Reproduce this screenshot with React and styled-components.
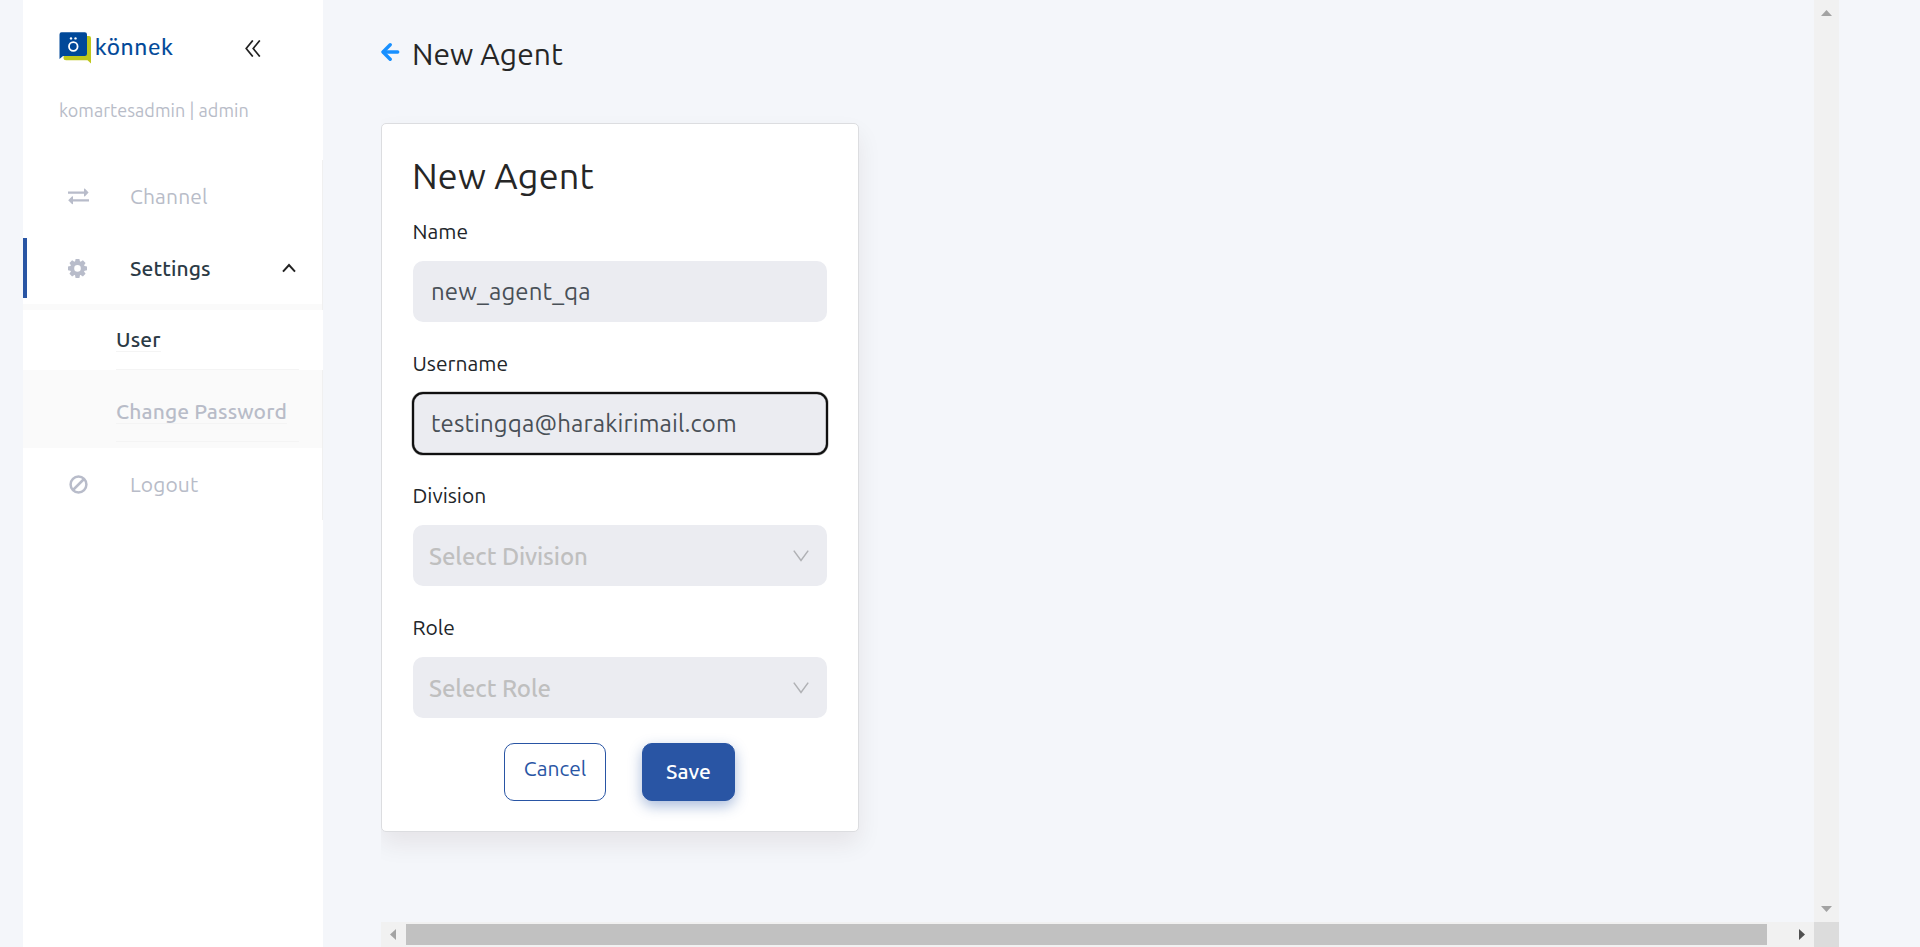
import React from "react";
import styled, { createGlobalStyle } from "styled-components";

const GlobalStyle = createGlobalStyle`
  *, *::before, *::after { box-sizing: border-box; }
  html, body { margin: 0; height: 100%; overflow: hidden; }
  body {
    background: #f4f6fa;
    font-family: Ubuntu, "Noto Sans", sans-serif;
    color: #212529;
  }
`;

const Page = styled.div`
  display: flex;
  width: 1920px;
  height: 947px;
  padding-left: 23px;
  overflow: hidden;
`;

/* ---------- sidebar ---------- */

const Sidebar = styled.aside`
  flex: none;
  width: 300px;
  background: #fff;
`;

const Brand = styled.div`
  display: flex;
  height: 94px;
  padding: 32px 62px 0 36px;
  justify-content: space-between;
`;

const Logo = styled.div`
  display: flex;
  gap: 3px;

  > svg { flex: none; }
`;

const LogoName = styled.span`
  font-family: Lato, sans-serif;
  font-size: 22.5px;
  line-height: 30px;
  letter-spacing: 1.15px;
  color: #004899;
  -webkit-text-stroke: 0.15px #004899;
`;

const CollapseIcon = styled.svg`
  margin-top: 8px;
`;

const Profile = styled.div`
  height: 66px;
  padding-left: 36px;
  font-size: 18px;
  line-height: 33px;
  letter-spacing: 0.05px;
  color: #b8bcc8;
`;

const Menu = styled.nav`
  width: 300px;
  height: 360px;
  border-right: 1px solid #f0f0f0;
`;

const MenuGroup = styled.div`
  display: flow-root;
`;

const MenuItem = styled.div`
  display: flex;
  align-items: center;
  justify-content: space-between;
  height: 60px;
  margin: 6px 0;
  padding: 0 26px 0 41px;
  border-left: 4px solid ${(p) => (p.$active ? "#2955a4" : "transparent")};
  color: ${(p) => (p.$active ? "#2b3a45" : "#b8bcc8")};
  font-size: 21px;
  font-weight: ${(p) => (p.$active ? 500 : 400)};
  letter-spacing: 0.12px;
`;

const MenuLabel = styled.span`
  display: flex;
  align-items: center;
  gap: 40px;
`;

const Submenu = styled.div`
  display: flow-root;
  height: 144px;
  background: #fafafa;
`;

const SubItem = styled.div`
  height: 60px;
  margin: 0 ${(p) => (p.$active ? "-1px" : "0")} 12px 0;
  padding-left: 93px;
  background: ${(p) => (p.$active ? "#fff" : "transparent")};
  color: ${(p) => (p.$active ? "#2b3a45" : "#b8bcc8")};

  &:first-child { margin-top: 6px; }
`;

const SubItemBody = styled.div`
  display: flex;
  align-items: center;
  width: 183px;
  height: 60px;
  border-bottom: 1px solid #f4f4f4;
`;

const SubItemLabel = styled.span`
  margin-top: 2px;
  padding-bottom: 2px;
  border-bottom: 1px solid #f4f4f4;
  font-size: 21px;
  font-weight: 500;
  line-height: 20px;
  letter-spacing: 0.12px;
  white-space: nowrap;
`;

/* ---------- content ---------- */

const Content = styled.main`
  display: flex;
  flex-direction: column;
  width: 1433px;
  height: 947px;
  margin-left: 58px;
`;

const Scroller = styled.div`
  height: 922px;
  overflow: hidden;
`;

const PageHeader = styled.header`
  display: flex;
  height: 123px;
  padding-top: 34px;
  gap: 11px;

  > svg { flex: none; margin-top: 8px; }
`;

const PageTitle = styled.h1`
  margin: 0;
  font-size: 30px;
  font-weight: 400;
  line-height: 40px;
  letter-spacing: 0.05px;
  color: #262626;
`;

const Card = styled.section`
  width: 478px;
  height: 709px;
  padding: 30px 31px;
  background: #fff;
  border: 1px solid #dcdde0;
  border-radius: 5px;
  box-shadow: 0 12px 24px rgba(50, 0, 0, 0.075);
`;

const CardTitle = styled.h2`
  margin: 0 0 18px -1px;
  font-size: 36px;
  font-weight: 400;
  line-height: 44px;
  letter-spacing: 0.15px;
  color: #262626;
`;

const Fields = styled.div`
  display: flex;
  flex-direction: column;
  gap: 26px;
`;

const Field = styled.label`
  display: block;
`;

const FieldLabel = styled.span`
  display: block;
  height: 30px;
  margin: 0 0 15px -0.5px;
  font-size: 21px;
  line-height: 30px;
  color: #212529;
`;

const TextInput = styled.input`
  display: block;
  width: 414px;
  height: 61px;
  padding: 0 18px;
  border: 0;
  border-radius: 10px;
  outline: ${(p) => (p.$focused ? "2px solid #101010" : "none")};
  outline-offset: -1px;
  box-shadow: ${(p) =>
    p.$focused ? "0 0 0 1.5px rgba(0, 0, 0, 0.35), inset 0 0 0 1.5px rgba(0, 0, 0, 0.35)" : "none"};
  background: #ebecf1;
  font-family: inherit;
  font-size: 24px;
  letter-spacing: 0.14px;
  color: #495057;
`;

const Select = styled.div`
  display: flex;
  align-items: center;
  justify-content: space-between;
  width: 414px;
  height: 61px;
  padding: 0 18px 0 16px;
  border-radius: 10px;
  background: #ebecf1;
  font-size: 24px;
  font-weight: 500;
  letter-spacing: -0.1px;
  line-height: 28px;
  color: #bfbfbf;
`;

const SelectText = styled.span`
  padding-top: 2px;
`;

const Actions = styled.div`
  display: flex;
  justify-content: center;
  gap: 36px;
  margin-top: 25px;
  padding-right: 1px;
`;

const Button = styled.button`
  width: ${(p) => (p.$primary ? "93px" : "102px")};
  height: 58px;
  padding: ${(p) => (p.$primary ? "0 0 2px" : "0 0 8px")};
  border: 1px solid #2955a4;
  border-radius: 10px;
  background: ${(p) => (p.$primary ? "#2955a4" : "#fff")};
  box-shadow: ${(p) => (p.$primary ? "0 5px 14px rgba(41, 85, 164, 0.4)" : "none")};
  color: ${(p) => (p.$primary ? "#fff" : "#2955a4")};
  font-family: inherit;
  font-size: 21px;
  font-weight: ${(p) => (p.$primary ? 500 : 400)};
`;

/* ---------- scroll bars ---------- */

const HorizontalBar = styled.div`
  display: flex;
  align-items: center;
  justify-content: space-between;
  height: 25px;
  padding: 0 9px;
  background: #f1f1f1;
`;

const Thumb = styled.div`
  width: 1361px;
  height: 21px;
  margin: 0 auto 0 10px;
  background: #c1c1c1;
`;

const VerticalRail = styled.div`
  width: 25px;
  height: 947px;
`;

const VerticalBar = styled.div`
  display: flex;
  flex-direction: column;
  align-items: center;
  justify-content: space-between;
  height: 922px;
  padding: 10px 0;
  background: #f1f1f1;
`;

const Corner = styled.div`
  height: 25px;
  background: #dcdcdc;
`;

/* ---------- drawings ---------- */

const LogoMark = () => (
  <svg width="33" height="32" viewBox="0 0 33 32">
    <path d="M6 4h24q2 0 2 2v25.500l-3.500-3.200H7q-2.500 0-2.500-2z" fill="#bfc71c" />
    <path d="M2.500.3h23.300q2.200 0 2.200 2.200v19.300q0 2.200-2.200 2.200H4L.5 27V2.500Q.5.3 2.500.3z" fill="#004899" />
    <circle cx="14.300" cy="14.500" r="4.300" fill="none" stroke="#fff" strokeWidth="1.800" />
    <circle cx="12" cy="6.400" r="1.200" fill="#fff" />
    <circle cx="16.500" cy="6.400" r="1.200" fill="#fff" />
  </svg>
);

const DoubleLeft = () => (
  <CollapseIcon width="16" height="17" viewBox="0 0 16 17" fill="none" stroke="#222" strokeWidth="1.700">
    <path d="M7.800.4 1.200 8.500l6.600 8.100M14.800.4 8.200 8.500l6.600 8.100" />
  </CollapseIcon>
);

const ExchangeIcon = () => (
  <svg width="22" height="18" viewBox="0 0 22 18" fill="#b8bcca">
    <path d="M0 4.600h16V1.700l.8-.2L20.600 5.500 16.800 9.500l-.8-.2V6.800H0zM21 12.200H5V9.400l-.8-.2L.2 13.200l4 4 .8-.2v-2.600h16z" />
  </svg>
);

const GearIcon = () => (
  <svg width="22" height="20" viewBox="-9.500 -10.400 22 20" fill="#b8bcca">
    {[0, 45, 90, 135, 180, 225, 270, 315].map((angle) => (
      <path key={angle} d="M-2.600-6-1.900-9.500h3.800L2.600-6z" transform={`rotate(${angle})`} />
    ))}
    <circle r="5.300" fill="none" stroke="#b8bcca" strokeWidth="4" />
  </svg>
);

const BanIcon = () => (
  <svg width="22" height="20" viewBox="0 -0.500 22 20" fill="none" stroke="#b8bcca" strokeWidth="2.500">
    <circle cx="10.500" cy="10" r="7.900" />
    <path d="M5 15.500 16 4.500" />
  </svg>
);

const CaretUp = () => (
  <svg width="14" height="10" viewBox="0 0 14 10" fill="none" stroke="#222" strokeWidth="2">
    <path d="M1 8.600 7 2l6 6.600" />
  </svg>
);

const ArrowLeft = () => (
  <svg width="20" height="20" viewBox="0 0 20 20" fill="none" stroke="#1890ff" strokeWidth="3.400" strokeLinecap="round" strokeLinejoin="round">
    <path d="M9.200 2.800 2 10l7.200 7.200" />
    <path d="M2.500 10h14.200" />
  </svg>
);

const ChevronDown = () => (
  <svg width="16" height="12" viewBox="0 0 16 12" fill="none" stroke="#b0b1b5" strokeWidth="1.500">
    <path d="M.8.6 8 10.400 15.200.6" />
  </svg>
);

const scrollArrows = {
  left: { w: 6, h: 11, d: "M6 0v11L0 5.500z" },
  right: { w: 6, h: 11, d: "M0 0v11l6-5.500z" },
  up: { w: 11, h: 6, d: "M0 6h11L5.500 0z" },
  down: { w: 11, h: 6, d: "M0 0h11L5.500 6z" },
};

const ScrollArrow = ({ direction, color = "#a3a3a3" }) => {
  const { w, h, d } = scrollArrows[direction];
  return (
    <svg width={w} height={h} viewBox={`0 0 ${w} ${h}`} fill={color}>
      <path d={d} />
    </svg>
  );
};

export default function App() {
  return (
    <>
      <GlobalStyle />
      <Page>
        <Sidebar>
          <Brand>
            <Logo>
              <LogoMark />
              <LogoName>könnek</LogoName>
            </Logo>
            <DoubleLeft />
          </Brand>
          <Profile>komartesadmin | admin</Profile>
          <Menu>
            <MenuGroup>
              <MenuItem>
                <MenuLabel>
                  <ExchangeIcon />
                  Channel
                </MenuLabel>
              </MenuItem>
            </MenuGroup>
            <MenuGroup>
              <MenuItem $active>
                <MenuLabel>
                  <GearIcon />
                  Settings
                </MenuLabel>
                <CaretUp />
              </MenuItem>
            </MenuGroup>
            <Submenu>
              <SubItem $active>
                <SubItemBody>
                  <SubItemLabel>User</SubItemLabel>
                </SubItemBody>
              </SubItem>
              <SubItem>
                <SubItemBody>
                  <SubItemLabel>Change Password</SubItemLabel>
                </SubItemBody>
              </SubItem>
            </Submenu>
            <MenuGroup>
              <MenuItem>
                <MenuLabel>
                  <BanIcon />
                  Logout
                </MenuLabel>
              </MenuItem>
            </MenuGroup>
          </Menu>
        </Sidebar>

        <Content>
          <Scroller>
            <PageHeader>
              <ArrowLeft />
              <PageTitle>New Agent</PageTitle>
            </PageHeader>
            <Card>
              <CardTitle>New Agent</CardTitle>
              <Fields>
                <Field>
                  <FieldLabel>Name</FieldLabel>
                  <TextInput defaultValue="new_agent_qa" />
                </Field>
                <Field>
                  <FieldLabel>Username</FieldLabel>
                  <TextInput $focused defaultValue="testingqa@harakirimail.com" />
                </Field>
                <Field as="div">
                  <FieldLabel>Division</FieldLabel>
                  <Select>
                    <SelectText>Select Division</SelectText>
                    <ChevronDown />
                  </Select>
                </Field>
                <Field as="div">
                  <FieldLabel>Role</FieldLabel>
                  <Select>
                    <SelectText>Select Role</SelectText>
                    <ChevronDown />
                  </Select>
                </Field>
              </Fields>
              <Actions>
                <Button>Cancel</Button>
                <Button $primary>Save</Button>
              </Actions>
            </Card>
          </Scroller>
          <HorizontalBar>
            <ScrollArrow direction="left" />
            <Thumb />
            <ScrollArrow direction="right" color="#505050" />
          </HorizontalBar>
        </Content>
        <VerticalRail>
          <VerticalBar>
            <ScrollArrow direction="up" />
            <ScrollArrow direction="down" />
          </VerticalBar>
          <Corner />
        </VerticalRail>
      </Page>
    </>
  );
}
